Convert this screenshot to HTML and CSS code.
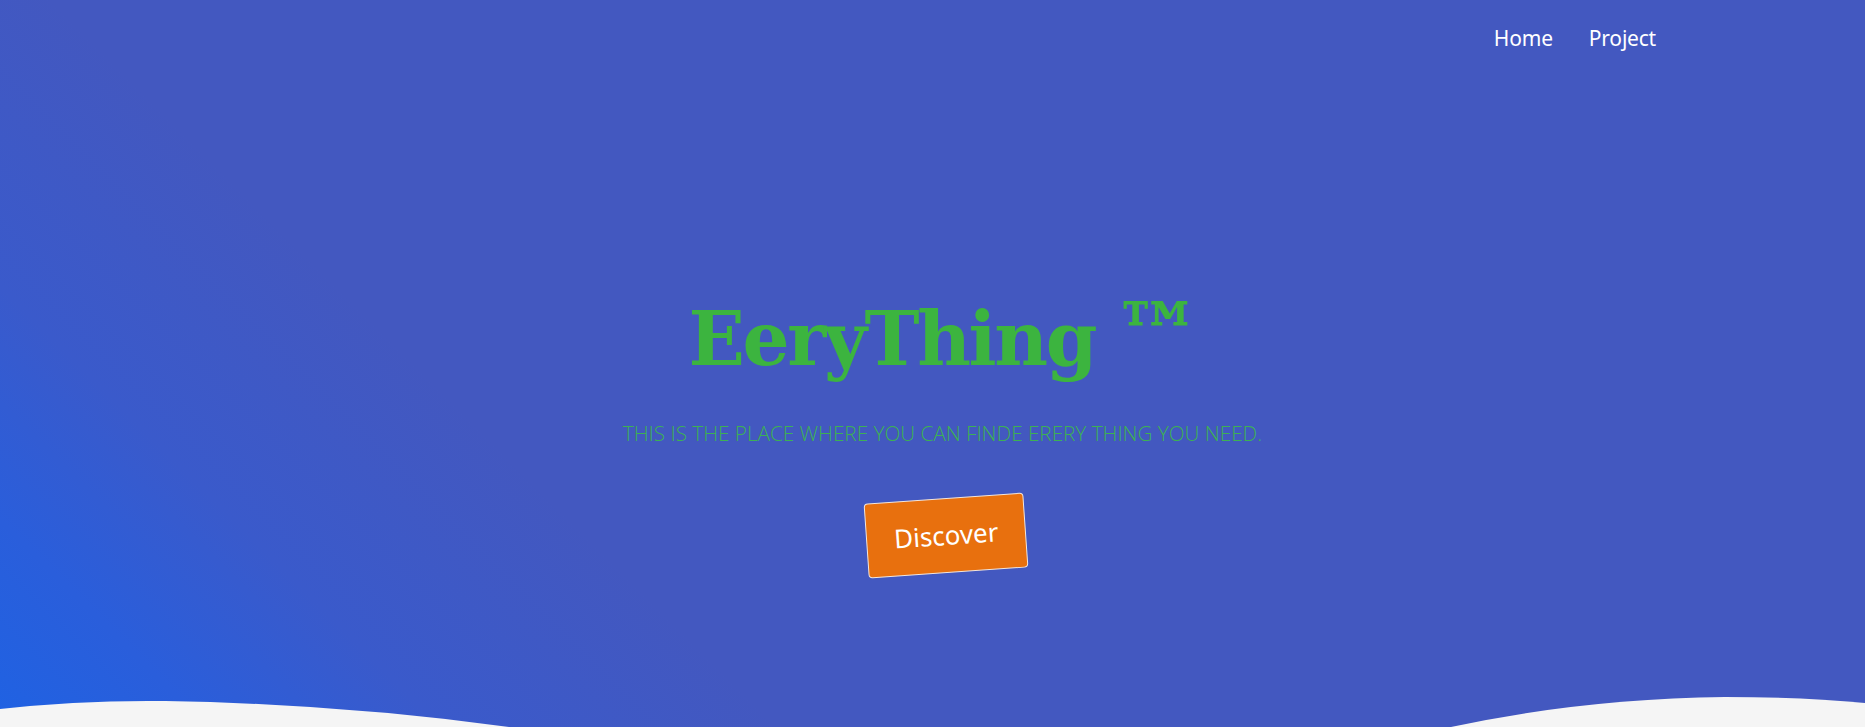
FILE: index.html
```html
<!DOCTYPE html>
<html lang="en">
<head>
<meta charset="utf-8">
<title>EeryThing</title>
<link rel="stylesheet" href="styles.css">
</head>
<body>
<header class="hero">
  <nav class="nav">
    <a class="nav-link" href="#">Home</a>
    <a class="nav-link" href="#">Project</a>
  </nav>
  <section class="hero-content">
    <h1 class="title">EeryThing <span class="tm">™</span></h1>
    <p class="subtitle">THIS IS THE PLACE WHERE YOU CAN FINDE ERERY THING YOU NEED.</p>
    <a class="discover" href="#">Discover</a>
  </section>
  <svg class="wave" viewBox="0 690 1865 37" preserveAspectRatio="none" aria-hidden="true">
    <path d="M0 709 Q 80 700 165 701 Q 340 704 509 727 L 0 727 Z" fill="#f5f5f5"/>
    <path d="M1451 727 Q 1580 699 1725 697 Q 1800 697 1865 703 L 1865 727 Z" fill="#f5f5f5"/>
  </svg>
</header>
</body>
</html>
```

FILE: styles.css
```css
html, body {
  margin: 0;
  padding: 0;
}

body {
  font-family: "Noto Sans", "Open Sans", sans-serif;
  background: #f5f5f5;
}

.hero {
  position: relative;
  height: 727px;
  overflow: hidden;
  display: flex;
  flex-direction: column;
  background: linear-gradient(45deg, #1f62e3 0%, #2a5edb 8%, #3a5acb 17%, #4358c0 30%, #4358c0 100%);
}

.nav {
  display: flex;
  justify-content: flex-end;
  gap: 36px;
  padding: 24px 209px 0 0;
}

.nav-link {
  color: #ffffff;
  text-decoration: none;
  font-size: 21px;
  letter-spacing: -0.2px;
}

.hero-content {
  display: flex;
  flex-direction: column;
  align-items: center;
  padding-left: 20px;
  margin-top: 250px;
}

.title {
  margin: 0;
  padding-left: 5px;
  font-family: "DejaVu Serif", serif;
  font-weight: bold;
  font-size: 74px;
  line-height: 1;
  letter-spacing: -2.4px;
  color: #3cb43f;
}

.tm {
  font-size: 88px;
  line-height: 0;
  margin-left: -5px;
  letter-spacing: 0;
}

.subtitle {
  margin: 43px 0 0;
  font-family: "Open Sans", sans-serif;
  font-weight: 300;
  font-size: 20.7px;
  color: #3db153;
}

.discover {
  margin-top: 51px;
  margin-left: 8px;
  display: inline-block;
  padding: 19px 27px;
  font-size: 26px;
  line-height: 1.36;
  color: #ffffff;
  text-decoration: none;
  background: #e8700e;
  border: 1px solid #f3e6dc;
  border-radius: 4px;
  transform: rotate(-4deg);
}

.wave {
  position: absolute;
  left: 0;
  bottom: 0;
  width: 100%;
  height: 37px;
  display: block;
}
```
